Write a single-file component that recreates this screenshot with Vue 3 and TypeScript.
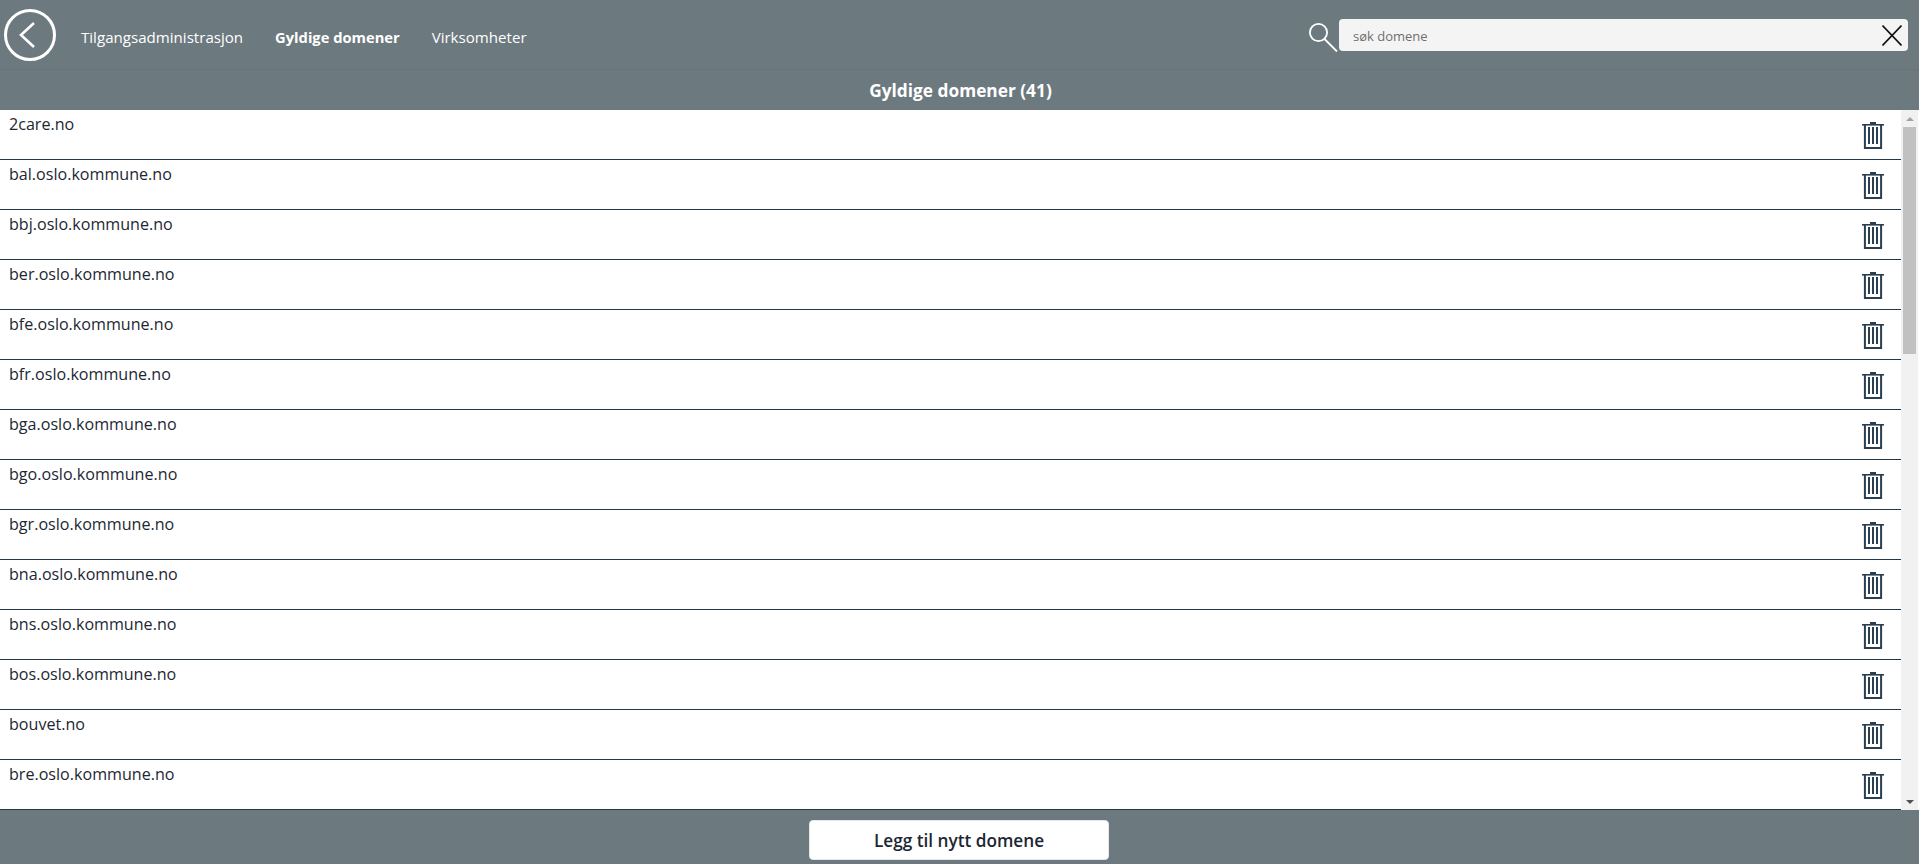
<script setup lang="ts">
const domains: string[] = [
  '2care.no',
  'bal.oslo.kommune.no',
  'bbj.oslo.kommune.no',
  'ber.oslo.kommune.no',
  'bfe.oslo.kommune.no',
  'bfr.oslo.kommune.no',
  'bga.oslo.kommune.no',
  'bgo.oslo.kommune.no',
  'bgr.oslo.kommune.no',
  'bna.oslo.kommune.no',
  'bns.oslo.kommune.no',
  'bos.oslo.kommune.no',
  'bouvet.no',
  'bre.oslo.kommune.no',
]
const total = 41
const rowHeight = 50
const listHeight = 700
const trackHeight = listHeight - 34
const thumbHeight = Math.round((trackHeight * listHeight) / (total * rowHeight))
</script>

<template>
  <div class="page">
    <header class="topbar">
      <button class="back" aria-label="Tilbake">
        <svg width="54" height="54" viewBox="0 0 54 54" fill="none" stroke="#fff">
          <circle cx="27" cy="27" r="24.5" stroke-width="3" />
          <path d="M31 15 L18 27 L31 39" stroke-width="2.6" />
        </svg>
      </button>
      <nav class="nav">
        <a>Tilgangsadministrasjon</a>
        <a class="current">Gyldige domener</a>
        <a>Virksomheter</a>
      </nav>
      <div class="search">
        <svg class="lens" width="29" height="29" viewBox="0 0 29 29" fill="none" stroke="#fff">
          <circle cx="9.5" cy="9.5" r="8.6" stroke-width="1.8" />
          <path d="M15.5 16 L28 28.5" stroke-width="1.8" />
        </svg>
        <div class="field">
          <span class="placeholder">søk domene</span>
          <svg width="20" height="21" viewBox="0 0 20 21" fill="none" stroke="#111">
            <path d="M0.5 0.5 L19.5 20.5 M19.5 0.5 L0.5 20.5" stroke-width="1.6" />
          </svg>
        </div>
      </div>
    </header>

    <div class="title">Gyldige domener ({{ total }})</div>

    <main class="content">
      <ul class="list">
        <li v-for="d in domains" :key="d" class="row">
          <span class="name">{{ d }}</span>
          <svg class="trash" width="22" height="27" viewBox="0 0 22 27" fill="none" stroke="#2a3f52">
            <path d="M8 0 H14 V2.5 H8 Z" fill="#2a3f52" stroke="none" />
            <path d="M0 2.8 H22" stroke-width="1.6" />
            <path d="M2.9 3 V26 H19.1 V3" stroke-width="2" />
            <path d="M7 5 V22 M11 5 V22 M15 5 V22" stroke-width="2" />
          </svg>
        </li>
      </ul>
      <div class="scrollbar">
        <span class="arrow up"></span>
        <div class="track">
          <div class="thumb" :style="{ height: thumbHeight + 'px' }"></div>
        </div>
        <span class="arrow down"></span>
      </div>
    </main>

    <footer class="footer">
      <button class="add">Legg til nytt domene</button>
    </footer>
  </div>
</template>

<style scoped>
.page {
  display: flex;
  flex-direction: column;
  height: 864px;
  font-family: "Open Sans", "Noto Sans", sans-serif;
  background: #6c797e;
  color: #1c2733;
  overflow: hidden;
}

.topbar {
  display: flex;
  align-items: center;
  height: 70px;
  box-sizing: border-box;
  border-bottom: 1px solid #667377;
  padding-left: 3px;
}

.back {
  display: flex;
  padding: 0;
  border: 0;
  background: none;
  width: 54px;
  height: 54px;
  margin-top: 1px;
}

.nav {
  display: flex;
  gap: 32px;
  margin-left: 24px;
  margin-top: 5px;
  font-size: 15.1px;
  color: #fff;
}

.nav .current {
  font-size: 14.7px;
  font-weight: 700;
}

.search {
  display: flex;
  align-items: center;
  margin-left: auto;
  margin-right: 11px;
}

.lens {
  margin-top: 5px;
  margin-right: 1px;
}

.field {
  display: flex;
  align-items: center;
  justify-content: space-between;
  width: 569px;
  height: 32px;
  margin-top: 1px;
  box-sizing: border-box;
  padding: 0 6px 0 14px;
  background: #f4f4f4;
  border-radius: 4px;
}

.placeholder {
  margin-top: 1px;
  font-size: 13px;
  color: #6f6f6f;
}

.title {
  height: 40px;
  padding-left: 2px;
  line-height: 42px;
  text-align: center;
  font-size: 17.3px;
  font-weight: 700;
  color: #fff;
}

.content {
  display: flex;
  height: 700px;
  background: #fff;
}

.list {
  flex: 1;
  margin: 0;
  padding: 0;
  list-style: none;
}

.row {
  display: flex;
  justify-content: space-between;
  height: 50px;
  box-sizing: border-box;
  border-bottom: 1px solid #24384a;
  padding: 3px 17px 0 9px;
}

.name {
  font-size: 16.1px;
  line-height: 22px;
}

.trash {
  margin-top: 9px;
}

.scrollbar {
  display: flex;
  flex-direction: column;
  width: 17px;
  margin-right: 1px;
  background: #f1f1f1;
}

.arrow {
  height: 17px;
  display: flex;
  align-items: center;
  justify-content: center;
}

.arrow::before {
  content: "";
  border-left: 4px solid transparent;
  border-right: 4px solid transparent;
}

.arrow.up::before {
  border-bottom: 4px solid #a3a3a3;
}

.arrow.down::before {
  border-top: 4px solid #505050;
}

.track {
  flex: 1;
}

.thumb {
  background: #c1c1c1;
  margin: 0 2px;
}

.footer {
  flex: 1;
  display: flex;
  justify-content: center;
  align-items: flex-start;
  padding-top: 10px;
}

.add {
  width: 300px;
  height: 40px;
  margin-left: -1px;
  border: 1px solid #e4e6e7;
  border-radius: 4px;
  background: #fff;
  font-family: inherit;
  font-size: 17.2px;
  font-weight: 600;
  color: #1c2733;
}
</style>
